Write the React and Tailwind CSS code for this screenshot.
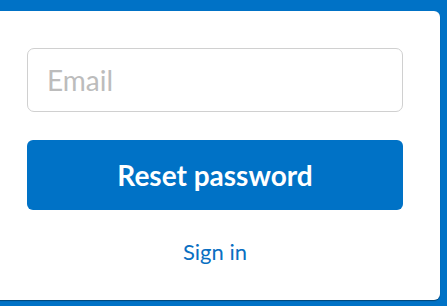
import React from 'react';

const App = () => {
  return (
    <div className="h-[306px] w-[447px] overflow-hidden bg-[#0072c6] pt-[11px] font-['Lato',sans-serif]">
      <div className="-ml-[10px] w-[450px] h-[289px] rounded-[6px] bg-white px-[37px] pt-[37px] shadow-[0_1px_1px_rgba(0,0,0,0.4)]">
        <input
          type="email"
          placeholder="Email"
          className="block w-full h-[64px] rounded-[7px] border border-[#d0d0d0] px-[19px] text-[28px] text-gray-700 placeholder:text-[#bcbcbc] outline-none"
        />
        <button className="mt-[28px] block w-full h-[70px] rounded-[6px] bg-[#0072c6] text-[28px] font-bold text-white">
          Reset password
        </button>
        <div className="mt-[25px] text-center">
          <a href="#" className="text-[22px] text-[#0a6fc2]">Sign in</a>
        </div>
      </div>
    </div>
  );
};

export default App;
